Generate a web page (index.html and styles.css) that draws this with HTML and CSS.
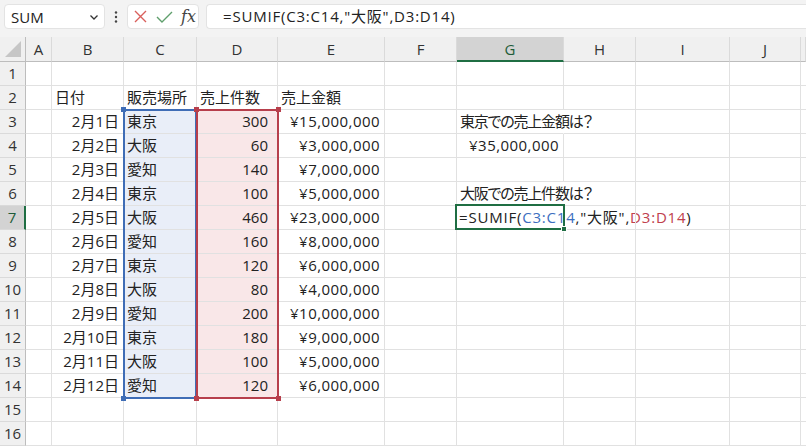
FILE: index.html
```html
<!DOCTYPE html>
<html lang="ja">
<head>
  <meta charset="UTF-8" />
  <title>SUMIF</title>
  <link rel="stylesheet" href="styles.css">
</head>
<body>
  <!-- 数式バー -->
  <div class="toolbar">
    <div class="namebox">
      <span>SUM</span>
      <svg class="chev" width="8" height="5" viewBox="0 0 8 5"><polyline points="0.5,0.5 4,4 7.5,0.5" fill="none" stroke="#333" stroke-width="1.3"/></svg>
    </div>
    <svg class="dots" width="4" height="12" viewBox="0 0 4 12"><circle cx="2" cy="1.5" r="1.2" fill="#444"/><circle cx="2" cy="6" r="1.2" fill="#444"/><circle cx="2" cy="10.5" r="1.2" fill="#444"/></svg>
    <div class="fxbox">
      <svg width="13" height="13" viewBox="0 0 13 13"><path d="M1 1 L12 12 M12 1 L1 12" stroke="#d9605c" stroke-width="1.4" fill="none"/></svg>
      <svg width="17" height="12" viewBox="0 0 17 12"><polyline points="1,6 6,11 16,1" stroke="#5f9f6c" stroke-width="1.4" fill="none"/></svg>
      <span class="fx">fx</span>
    </div>
    <div class="formula">=SUMIF(C3:C14,"大阪",D3:D14)</div>
  </div>

  <!-- シート -->
  <div class="sheet">
    <div class="h corner"><span class="tri"></span></div>
    <div class="h">A</div><div class="h">B</div><div class="h">C</div><div class="h">D</div><div class="h">E</div><div class="h">F</div><div class="h sel">G</div><div class="h">H</div><div class="h">I</div><div class="h">J</div><div class="h"></div>

    <div class="rh">1</div>
    <div class="c"></div><div class="c"></div><div class="c"></div><div class="c"></div><div class="c"></div><div class="c"></div><div class="c"></div><div class="c"></div><div class="c"></div><div class="c"></div><div class="c"></div>

    <div class="rh">2</div>
    <div class="c"></div><div class="c">日付</div><div class="c">販売場所</div><div class="c">売上件数</div><div class="c">売上金額</div><div class="c"></div><div class="c"></div><div class="c"></div><div class="c"></div><div class="c"></div><div class="c"></div>

    <div class="rh">3</div>
    <div class="c"></div><div class="c r">2月1日</div><div class="c blue">東京</div><div class="c r cnt pink">300</div><div class="c r yen">¥15,000,000</div><div class="c"></div><div class="c over note">東京での売上金額は？</div><div class="c"></div><div class="c"></div><div class="c"></div><div class="c"></div>

    <div class="rh">4</div>
    <div class="c"></div><div class="c r">2月2日</div><div class="c blue">大阪</div><div class="c r cnt pink">60</div><div class="c r yen">¥3,000,000</div><div class="c"></div><div class="c r yen">¥35,000,000</div><div class="c"></div><div class="c"></div><div class="c"></div><div class="c"></div>

    <div class="rh">5</div>
    <div class="c"></div><div class="c r">2月3日</div><div class="c blue">愛知</div><div class="c r cnt pink">140</div><div class="c r yen">¥7,000,000</div><div class="c"></div><div class="c"></div><div class="c"></div><div class="c"></div><div class="c"></div><div class="c"></div>

    <div class="rh">6</div>
    <div class="c"></div><div class="c r">2月4日</div><div class="c blue">東京</div><div class="c r cnt pink">100</div><div class="c r yen">¥5,000,000</div><div class="c"></div><div class="c over note">大阪での売上件数は？</div><div class="c"></div><div class="c"></div><div class="c"></div><div class="c"></div>

    <div class="rh sel">7</div>
    <div class="c"></div><div class="c r">2月5日</div><div class="c blue">大阪</div><div class="c r cnt pink">460</div><div class="c r yen">¥23,000,000</div><div class="c"></div><div class="c over edit">=SUMIF(<span class="ref-c">C3:C14</span>,"大阪",<span class="ref-d">D3:D14</span>)</div><div class="c"></div><div class="c"></div><div class="c"></div><div class="c"></div>

    <div class="rh">8</div>
    <div class="c"></div><div class="c r">2月6日</div><div class="c blue">愛知</div><div class="c r cnt pink">160</div><div class="c r yen">¥8,000,000</div><div class="c"></div><div class="c"></div><div class="c"></div><div class="c"></div><div class="c"></div><div class="c"></div>

    <div class="rh">9</div>
    <div class="c"></div><div class="c r">2月7日</div><div class="c blue">東京</div><div class="c r cnt pink">120</div><div class="c r yen">¥6,000,000</div><div class="c"></div><div class="c"></div><div class="c"></div><div class="c"></div><div class="c"></div><div class="c"></div>

    <div class="rh">10</div>
    <div class="c"></div><div class="c r">2月8日</div><div class="c blue">大阪</div><div class="c r cnt pink">80</div><div class="c r yen">¥4,000,000</div><div class="c"></div><div class="c"></div><div class="c"></div><div class="c"></div><div class="c"></div><div class="c"></div>

    <div class="rh">11</div>
    <div class="c"></div><div class="c r">2月9日</div><div class="c blue">愛知</div><div class="c r cnt pink">200</div><div class="c r yen">¥10,000,000</div><div class="c"></div><div class="c"></div><div class="c"></div><div class="c"></div><div class="c"></div><div class="c"></div>

    <div class="rh">12</div>
    <div class="c"></div><div class="c r">2月10日</div><div class="c blue">東京</div><div class="c r cnt pink">180</div><div class="c r yen">¥9,000,000</div><div class="c"></div><div class="c"></div><div class="c"></div><div class="c"></div><div class="c"></div><div class="c"></div>

    <div class="rh">13</div>
    <div class="c"></div><div class="c r">2月11日</div><div class="c blue">大阪</div><div class="c r cnt pink">100</div><div class="c r yen">¥5,000,000</div><div class="c"></div><div class="c"></div><div class="c"></div><div class="c"></div><div class="c"></div><div class="c"></div>

    <div class="rh">14</div>
    <div class="c"></div><div class="c r">2月12日</div><div class="c blue">愛知</div><div class="c r cnt pink">120</div><div class="c r yen">¥6,000,000</div><div class="c"></div><div class="c"></div><div class="c"></div><div class="c"></div><div class="c"></div><div class="c"></div>

    <div class="rh">15</div>
    <div class="c"></div><div class="c"></div><div class="c"></div><div class="c"></div><div class="c"></div><div class="c"></div><div class="c"></div><div class="c"></div><div class="c"></div><div class="c"></div><div class="c"></div>

    <div class="rh">16</div>
    <div class="c"></div><div class="c"></div><div class="c"></div><div class="c"></div><div class="c"></div><div class="c"></div><div class="c"></div><div class="c"></div><div class="c"></div><div class="c"></div><div class="c"></div>

    <!-- 参照範囲の枠（セルの上に重ねる） -->
    <div class="range range-c">
      <span class="knob tl"></span><span class="knob bl"></span>
    </div>
    <div class="range range-d">
      <span class="knob tl"></span><span class="knob tr"></span><span class="knob bl"></span><span class="knob br"></span>
    </div>
    <div class="active"><span class="handle"></span></div>
  </div>
</body>
</html>
```

FILE: styles.css
```css
body {
  margin: 0;
  width: 806px;
  height: 446px;
  overflow: hidden;
  background: #fff;
  font-family: "Open Sans", "Noto Sans CJK JP", sans-serif;
  font-feature-settings: "palt";
  color: #222;
}

/* 数式バー */
.toolbar {
  height: 37px;
  box-sizing: border-box;
  padding-top: 4px;
  background: #f3f3f3;
  display: flex;
  align-items: flex-start;
}
.namebox {
  margin-left: 4px;
  width: 101px;
  height: 25px;
  box-sizing: border-box;
  background: #fff;
  border: 1px solid #e3e3e3;
  border-radius: 4px;
  display: flex;
  align-items: center;
  justify-content: space-between;
  padding: 0 6px 0 6px;
  font-size: 15px;
  color: #222;
}
.chev { margin-top: 1px; }
.dots {
  margin: 7px 0 0 9px;
}
.fxbox {
  margin-left: 9px;
  width: 72px;
  height: 25px;
  box-sizing: border-box;
  background: #fff;
  border: 1px solid #e3e3e3;
  border-radius: 4px;
  display: flex;
  align-items: center;
  gap: 9px;
  padding-left: 6px;
}
.fx {
  font-family: "DejaVu Serif", "Liberation Serif", serif;
  font-style: italic;
  font-size: 16px;
  color: #444;
  margin-left: -1px;
}
.formula {
  margin-left: 7px;
  flex: 1;
  height: 25px;
  box-sizing: border-box;
  background: #fff;
  border: 1px solid #e3e3e3;
  border-right: none;
  border-radius: 4px 0 0 4px;
  padding-left: 16px;
  font-size: 15px;
  line-height: 23px;
  letter-spacing: 0.8px;
  white-space: nowrap;
}

/* シート */
.sheet {
  position: relative;
  display: grid;
  grid-template-columns: 26px 26px 72px 73px 81px 107px 72px 107px 72px 94px 71px 5px;
  grid-template-rows: 25px;
  grid-auto-rows: 24px;
  font-size: 15px;
}
.h {
  background: #f0f0f0;
  border-right: 1px solid #dadada;
  border-bottom: 1px solid #bdbdbd;
  text-align: center;
  line-height: 24px;
  color: #333;
}
.h.sel {
  background: #d3d3d3;
  border-bottom: 2px solid #1f6e43;
  color: #1f5c39;
}
.corner {
  position: relative;
  border-right: 1px solid #bdbdbd;
}
.tri {
  position: absolute;
  right: 4px;
  bottom: 4px;
  width: 0;
  height: 0;
  border-left: 16px solid transparent;
  border-bottom: 16px solid #c6c6c6;
}
.rh {
  background: #f0f0f0;
  border-right: 1px solid #bdbdbd;
  border-bottom: 1px solid #dadada;
  text-align: center;
  line-height: 23px;
  color: #333;
}
.rh.sel {
  background: #d3d3d3;
  border-right: 2px solid #1f6e43;
  color: #1f5c39;
}
.c {
  border-right: 1px solid #e1e1e1;
  border-bottom: 1px solid #e1e1e1;
  padding: 0 3px;
  line-height: 23px;
  white-space: nowrap;
  overflow: visible;
  min-width: 0;
}
.c.r { text-align: right; padding-right: 4px; }
.c.cnt { padding-right: 9px; }
.c.yen { letter-spacing: 0.45px; }
.c.over { border-right-color: transparent; }
.c.note { letter-spacing: -1.2px; }
.c.edit { padding-left: 2px; letter-spacing: 0.8px; }
.blue { background: #e9eef8; }
.pink { background: #f9e7e8; }
.ref-c { color: #3c6ebf; }
.ref-d { color: #c0404d; }

/* 参照範囲の枠 */
.range {
  position: absolute;
  top: 72px;
  height: 290px;
  box-sizing: border-box;
  border: 2px solid;
}
.range-c {
  left: 123px;
  width: 74px;
  border-color: #3f6db6;
}
.range-d {
  left: 196px;
  width: 83px;
  border-color: #b73f4c;
}
.knob {
  position: absolute;
  width: 5px;
  height: 5px;
}
.range-c .knob { background: #3f6db6; }
.range-d .knob { background: #b73f4c; }
.knob.tl { left: -4px; top: -4px; }
.knob.tr { right: -4px; top: -4px; }
.knob.bl { left: -4px; bottom: -4px; }
.knob.br { right: -4px; bottom: -4px; }

/* アクティブセル */
.active {
  position: absolute;
  left: 455px;
  top: 167px;
  width: 110px;
  height: 26px;
  box-sizing: border-box;
  border: 2px solid #1f6e43;
}
.handle {
  position: absolute;
  right: -4px;
  bottom: -4px;
  width: 6px;
  height: 6px;
  background: #1f6e43;
  border: 1px solid #fff;
  box-sizing: border-box;
}
```
